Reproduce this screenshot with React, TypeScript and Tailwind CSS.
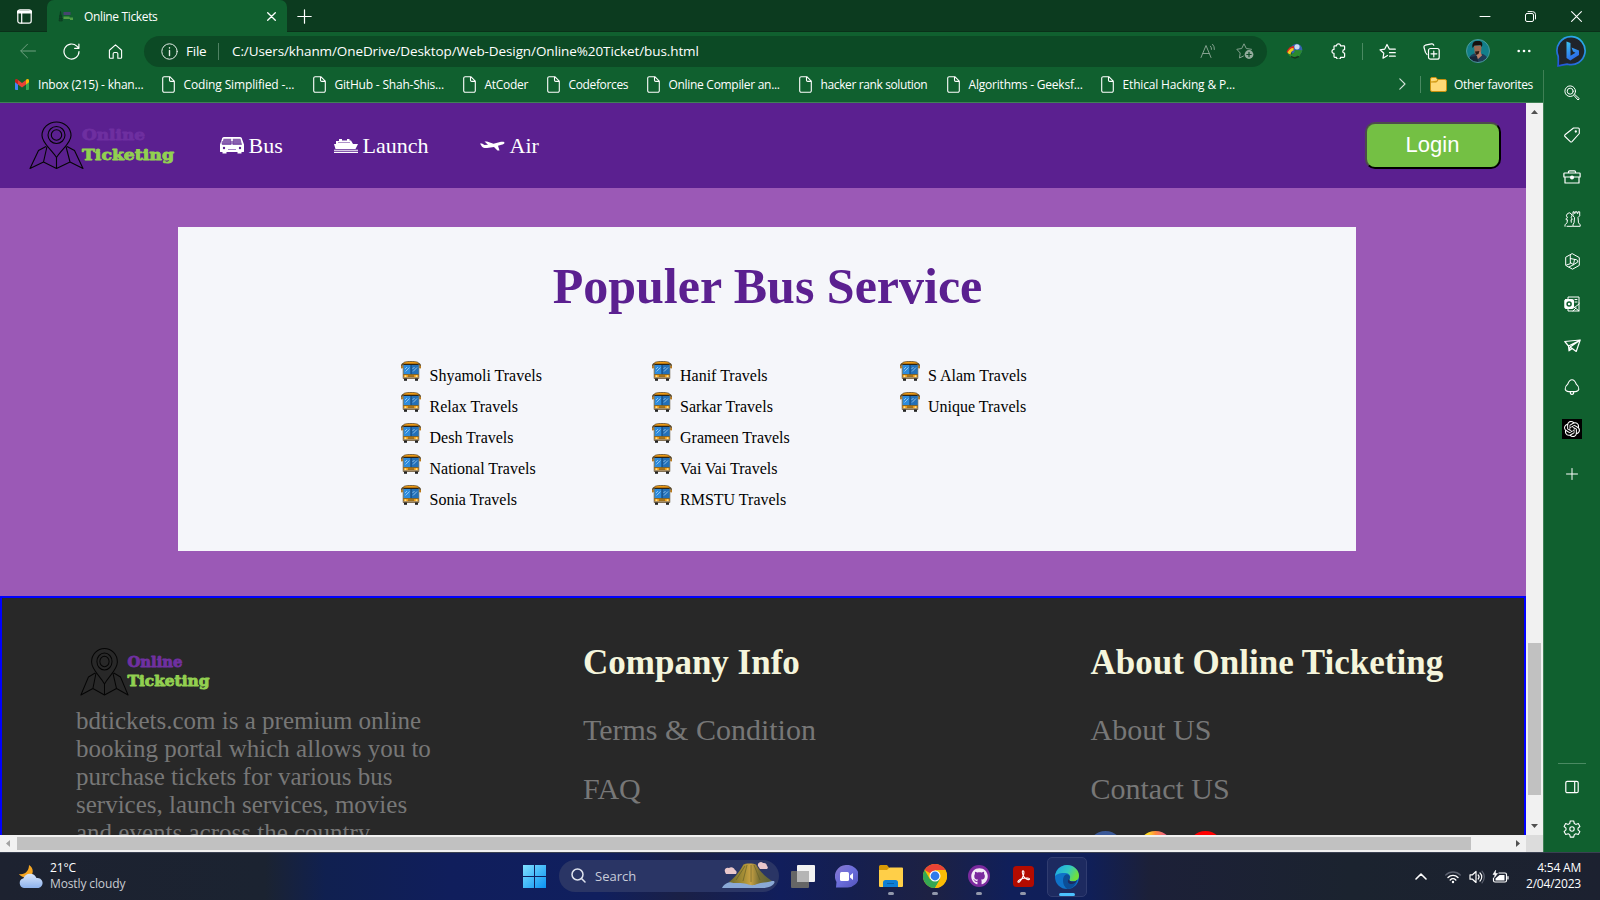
import type { ReactNode } from "react";
import { FaGithub } from "react-icons/fa";
import { SiOpenai } from "react-icons/si";

const UI = "font-['Open_Sans','Noto_Sans',sans-serif]";
const SERIF = "font-['Liberation_Serif',serif]";

type IconProps = { size?: number; w?: number; h?: number; vb?: string; color?: string; sw?: number; children: ReactNode };

function Icon({ size = 16, w, h, vb = "0 0 16 16", color = "#fff", sw = 1, children }: IconProps) {
  return (
    <svg className="block shrink-0" width={w ?? size} height={h ?? size} viewBox={vb} fill="none" stroke={color} strokeWidth={sw} strokeLinecap="round" strokeLinejoin="round">
      {children}
    </svg>
  );
}

/* ---------- browser chrome ---------- */

function TitleBar() {
  return (
    <div className="flex h-[32px] shrink-0 items-end bg-[#0c3b1f] shadow-[inset_0_-1px_0_#0a3019]">
      <div className="flex h-[32px] w-[47px] items-center pl-[17px]">
        <Icon size={15} vb="0 0 15 15" sw={1.2}>
          <rect x="0.8" y="0.8" width="13.4" height="13.4" rx="2.2" />
          <path d="M1 3h13" strokeWidth="3" />
          <path d="M4.7 4v10" />
        </Icon>
      </div>
      <div className="flex h-[32px] w-[240px] items-center rounded-t-[7px] bg-[#10602f] pl-[11px]">
        <svg className="block" width="16" height="16" viewBox="0 0 16 16">
          <path d="M1 13 2.500 3.500l1.800 9.500zM1 8h3.500M1 10.500h4" fill="#0d4a26" stroke="#0b3a1f" strokeWidth=".7" />
          <rect x="5.500" y="4" width="7" height="3" fill="#46456f" />
          <path d="M5.500 8.500h6v1h3.500v2.500H12v-1H5.500z" fill="#4f9e45" />
        </svg>
        <span className="ml-[10px] w-[183px] whitespace-nowrap pt-px text-[12px] leading-[16px] tracking-[-0.35px] text-white">Online Tickets</span>
        <Icon size={9} vb="0 0 9 9" sw={1.3}>
          <path d="M0.7 0.7l7.600 7.600M8.300 0.700l-7.600 7.600" />
        </Icon>
      </div>
      <div className="flex h-[32px] items-center pl-[10px]">
        <Icon size={15} vb="0 0 15 15" sw={1.2}>
          <path d="M7.500 0.800v13.400M0.800 7.500h13.400" />
        </Icon>
      </div>
      <div className="ml-auto flex h-[32px] items-center pr-[18px]">
        <Icon size={12} vb="0 0 12 12">
          <path d="M1 6.500h10" />
        </Icon>
        <div className="ml-[34px]">
          <Icon size={11} vb="0 0 11 11">
            <rect x="0.500" y="2.500" width="8" height="8" rx="1.500" />
            <path d="M3 0.600h4.500a3 3 0 0 1 3 3V8" />
          </Icon>
        </div>
        <div className="ml-[35px]">
          <Icon size={11} vb="0 0 11 11" sw={1.1}>
            <path d="M0.600 0.600l9.800 9.800M10.400 0.600l-9.800 9.800" />
          </Icon>
        </div>
      </div>
    </div>
  );
}

function Toolbar() {
  return (
    <div className="flex h-[38px] shrink-0 items-center bg-[#10602f] pl-[20px]">
      <Icon size={16} color="#6f9f80">
        <path d="M15.500 8H1M7.500 1.200 0.700 8l6.800 6.800" />
      </Icon>
      <div className="ml-[27px]">
        <Icon size={17} vb="0 0 17 17" sw={1.2}>
          <path d="M16 8.500A7.500 7.500 0 1 1 13.800 3.200L15.800 5.200M15.900 1v4.300h-4.300" />
        </Icon>
      </div>
      <div className="ml-[28px]">
        <Icon size={15} vb="0 0 15 16" sw={1.2}>
          <path d="M1 6.700 7.500 1 14 6.700V14.300a.9.9 0 0 1-.9.900H10V10.500A1.500 1.500 0 0 0 8.500 9h-2A1.500 1.500 0 0 0 5 10.500v4.700H1.900a.9.9 0 0 1-.9-.9z" />
        </Icon>
      </div>
      <div className="ml-[21px] flex h-[31px] w-[1123px] items-center rounded-full bg-[#0c4a25] pl-[17px]">
        <Icon size={17} vb="0 0 17 17" color="#e4ece7">
          <circle cx="8.500" cy="8.500" r="7.700" />
          <path d="M8.500 7.500v5M8.500 4.800v.2" strokeWidth="1.400" />
        </Icon>
        <span className="ml-[8px] w-[32px] whitespace-nowrap pt-px text-[13.5px] tracking-[-0.25px] text-white">File</span>
        <div className="h-[17px] w-px bg-[#4f8263]" />
        <span className="ml-[13px] whitespace-nowrap pt-px text-[13.5px] tracking-[-0.1px] text-white">C:/Users/khanm/OneDrive/Desktop/Web-Design/Online%20Ticket/bus.html</span>
        <div className="ml-auto flex items-center gap-[19px] pr-[13px]">
          <Icon size={17} vb="0 0 17 17" color="#84a18f">
            <path d="M1 14.500 6 2.500l5 12M2.800 10.500h6.500M10.500 3.200a4 4 0 0 1 1 3.200M12.600 1.300a6.500 6.500 0 0 1 1.800 5.200" />
          </Icon>
          <Icon size={18} vb="0 0 18 18" color="#84a18f">
            <path d="M7.500 14 3.500 16l.7-5L.8 7.300l4.900-.8L8 1.800l2.300 4.700 5.200.8" />
            <circle cx="13" cy="12.500" r="4.400" fill="#93ab9c" stroke="none" />
            <path d="M13 10.300v4.400M10.800 12.500h4.400" stroke="#0c4a25" strokeWidth="1.200" />
          </Icon>
        </div>
      </div>
      <div className="ml-[19px]">
        <svg className="block" width="17" height="16" viewBox="0 0 17 16">
          <circle cx="10.500" cy="6.500" r="5.800" fill="#3563ae" />
          <circle cx="11" cy="3.800" r="2.600" fill="#c9dbf2" />
          <path d="M0.500 9C2 5 4.500 3 8 3v3C5.500 7 4.500 9 4.500 11z" fill="#d8261f" />
          <path d="M1.500 10c1-3 3-5 6-5v2.500c-2 .5-3 2-3 4.500z" fill="#f3c81c" />
          <path d="M2 10.500c3 2.500 5 .5 7-2.500l-1-1 8.500.2L13 14l-1.500-1.500c-3.500 2.500-8 2.500-9.500-2z" fill="#2a8a2e" />
          <path d="M5 13.500 9 15l4-1.500" stroke="#16301a" fill="none" strokeWidth="1.300" />
        </svg>
      </div>
      <div className="ml-[28px]">
        <Icon size={16} sw={1.2}>
          <path d="M5.500 2.800a2 2 0 0 1 4 0h3.300a.8.8 0 0 1 .8.8v3a1.800 1.800 0 0 0 0 3.600v3.400a.8.8 0 0 1-.8.8H9.500a2 2 0 0 1-4 0H3.800a.8.8 0 0 1-.8-.8v-3.200a2 2 0 0 1 0-4V3.600a.8.8 0 0 1 .8-.8z" />
        </Icon>
      </div>
      <div className="ml-[15px] h-[17px] w-px bg-[#4a8a62]" />
      <div className="ml-[16px]">
        <Icon size={17} vb="0 0 17 17" sw={1.2}>
          <path d="M8.500 12.500 4 15.200l.8-5L1 6.800l4.800-.7L8 1.500l2.300 4.600M10.500 6.200h5.800M10.500 9.700h5.800M10.500 13.200h5.800" />
        </Icon>
      </div>
      <div className="ml-[27px]">
        <Icon size={17} vb="0 0 17 17" sw={1.2}>
          <rect x="5.500" y="5.500" width="10.700" height="10.700" rx="2" />
          <path d="M10.800 8v5.800M8 10.800h5.800M4 11.500 2.500 9.500 1 4.500A2 2 0 0 1 2.300 2.200L8.500 0.900a2 2 0 0 1 2.300 1.300" />
        </Icon>
      </div>
      <div className="ml-[26px]">
        <svg className="block" width="24" height="24" viewBox="0 0 24 24">
          <defs>
            <clipPath id="av"><circle cx="12" cy="12" r="11.500" /></clipPath>
          </defs>
          <g clipPath="url(#av)">
            <rect width="24" height="24" fill="#127f8b" />
            <path d="M2 24c0-6 3-9 8-10l7 1c4 2 6 5 6 9z" fill="#1f3d58" />
            <path d="M8 6.500h7.500l-.3 6-2.500 5-4-3z" fill="#9a6952" />
            <path d="M6.500 9C5.500 3 9 1.500 12 2c3-.5 5.500 1.500 3.800 6L14.500 6 8.500 6.500z" fill="#15110f" />
            <path d="M9.500 13l4.500-1.500 2 5-4.500 4z" fill="#b98068" />
            <path d="M4 18l7-1 1.500 7H2z" fill="#16263a" />
            <path d="M9 12.500l4.500-.5-1 3-2.500 1z" fill="#2a1a14" />
          </g>
          <circle cx="12" cy="12" r="11.500" fill="none" stroke="#4b9a9a" />
        </svg>
      </div>
      <div className="ml-[27px]">
        <svg className="block" width="14" height="4" viewBox="0 0 14 4" fill="#fff">
          <circle cx="1.700" cy="2" r="1.300" />
          <circle cx="7" cy="2" r="1.300" />
          <circle cx="12.300" cy="2" r="1.300" />
        </svg>
      </div>
      <div className="ml-[25px]">
        <svg className="block" width="32" height="32" viewBox="0 0 32 32">
          <defs>
            <linearGradient id="bo" x1="0" y1="1" x2="0.600" y2="0">
              <stop offset="0" stopColor="#2350d8" />
              <stop offset="1" stopColor="#2aa9e8" />
            </linearGradient>
            <linearGradient id="bb" x1="0" y1="0" x2="0.400" y2="1">
              <stop offset="0" stopColor="#3cc4f2" />
              <stop offset="1" stopColor="#2b6bea" />
            </linearGradient>
          </defs>
          <path d="M16 1.700a14 14 0 1 1-4.500 27.500c-3 .6-6.500 1.300-9.500 1.600.5-3 .3-6 .2-9.500A14 14 0 0 1 16 1.700z" fill="#20242a" stroke="url(#bo)" strokeWidth="1.700" />
          <path d="M10.500 6.500l4 1.500v12.800l5-3-2.500-1.200-1.500-4 7.500 3v4.400l-8.700 5.500-3.800-2.500z" fill="url(#bb)" />
        </svg>
      </div>
    </div>
  );
}

const BOOKMARKS = [
  { label: "Coding Simplified -...", w: "w-[151px]", t: "tracking-[-0.14px]" },
  { label: "GitHub - Shah-Shis...", w: "w-[150px]", t: "tracking-[-0.2px]" },
  { label: "AtCoder", w: "w-[84px]", t: "tracking-[-0.3px]" },
  { label: "Codeforces", w: "w-[100px]", t: "tracking-[-0.36px]" },
  { label: "Online Compiler an...", w: "w-[152px]", t: "tracking-[-0.3px]" },
  { label: "hacker rank solution", w: "w-[148px]", t: "tracking-[-0.38px]" },
  { label: "Algorithms - Geeksf...", w: "w-[154px]", t: "tracking-[-0.2px]" },
  { label: "Ethical Hacking & P...", w: "w-[150px]", t: "tracking-[-0.16px]" },
];

function Bookmarks() {
  return (
    <div className="flex h-[33px] shrink-0 items-center border-b border-[#3f8055] bg-[#10602f] pb-[4px] pl-[15px] text-[12px] text-white">
      <div className="flex w-[147px] items-center">
        <svg className="block" width="14" height="11" viewBox="0 0 14 11">
          <path d="M0 1.500V10a1 1 0 0 0 1 1h2V4.500z" fill="#4285f4" />
          <path d="M14 1.500V10a1 1 0 0 1-1 1h-2V4.500z" fill="#34a853" />
          <path d="M3 1v4.500L7 8.500l4-3V1L7 4z" fill="#ea4335" />
          <path d="M0 1.500C0 0 1.800-.5 3 .8V5.500L0 3.300z" fill="#c5221f" />
          <path d="M14 1.500c0-1.500-1.800-2-3-.7v4.700l3-2.200z" fill="#fbbc04" />
        </svg>
        <span className="ml-[9px] whitespace-nowrap pt-px tracking-[-0.2px]">Inbox (215) - khan...</span>
      </div>
      {BOOKMARKS.map((b) => (
        <div key={b.label} className={`flex shrink-0 items-center ${b.w}`}>
          <Icon w={13} h={17} vb="0 0 13 17" sw={1.1}>
            <path d="M2.200.7h5.600l4.500 4.500v9.600a1.500 1.500 0 0 1-1.500 1.500H2.200A1.500 1.500 0 0 1 .7 14.800V2.200A1.500 1.500 0 0 1 2.200.7zM7.500 1v3.200a1.200 1.200 0 0 0 1.200 1.200H12" />
          </Icon>
          <span className={`ml-[8.500px] whitespace-nowrap pt-px ${b.t}`}>{b.label}</span>
        </div>
      ))}
      <div className="ml-auto flex items-center pr-[10px]">
        <Icon w={7} h={12} vb="0 0 7 12" sw={1.1} color="#d5e3da">
          <path d="M.8.800 6 6 .8 11.200" />
        </Icon>
        <div className="ml-[14px] h-[17px] w-px bg-[#4a8a62]" />
        <svg className="ml-[9px] block" width="17" height="15" viewBox="0 0 17 15">
          <path d="M.5 2A1.500 1.500 0 0 1 2 .5h4L7.500 2.500H15A1.500 1.500 0 0 1 16.500 4v9A1.500 1.500 0 0 1 15 14.500H2A1.500 1.500 0 0 1 .5 13z" fill="#ffd976" stroke="#c8900f" />
          <path d="M1 5h5.500L8 3" stroke="#c8900f" fill="#e8b022" />
        </svg>
        <span className="ml-[7px] w-[79px] whitespace-nowrap pt-px tracking-[-0.36px]">Other favorites</span>
      </div>
    </div>
  );
}

function Sidebar() {
  return (
    <div className="flex w-[57px] shrink-0 flex-col items-center border-l border-[#3f8055] bg-[#10602f] pt-[15px]">
      <div className="flex flex-col items-center gap-[26px]">
        <Icon size={16}>
          <circle cx="6.200" cy="6.200" r="5.300" />
          <circle cx="6.200" cy="6.200" r="3" />
          <path d="M10 10.500 14 15l1.300-1.300L10.800 9.500" />
        </Icon>
        <Icon size={16} sw={1.1}>
          <path d="M9.500 1h4.800a1 1 0 0 1 1 1v4.500L8 14.600a1.200 1.200 0 0 1-1.700 0L1 9.500a1.200 1.200 0 0 1 0-1.700z" />
          <circle cx="11.800" cy="4.500" r=".6" fill="#fff" />
        </Icon>
        <Icon w={18} h={16} vb="0 0 18 16" sw={1.2}>
          <path d="M5.500 4V2.800A1 1 0 0 1 6.500 1.800h5a1 1 0 0 1 1 1V4M1.500 4h15a.6.600 0 0 1 .6.600V8H.9V4.600A.6.600 0 0 1 1.500 4zM2 8.200V14h14V8.200" />
          <circle cx="9" cy="8.500" r="1.400" fill="#fff" />
        </Icon>
        <Icon w={17} h={16} vb="0 0 17 16">
          <path d="M3 15.300h5.500M1 15.300v-1.500l2-2 .5-3H2.200V7.500L3.500 6.700a2.700 2.700 0 1 1 3.500 0L8 7.500v1.300H7l.3 2.500M9.500 15.300h6.700v-1.500l-1.700-2-.5-5.300 1.700-1.700V.8h-1.700v1.500h-1V.8h-1.800v1.500h-1V.8H9V4.800l1.500 1.700-.4 5-1 2z" />
        </Icon>
        <Icon size={17} vb="0 0 17 17">
          <path d="M8.500.8 15.300 4.600v7.800L8.500 16.200 1.700 12.400V4.600zM6.300 2.500v8.200L2.500 12M6.300 5.500l6 1.200a2 2 0 0 1 1.500 2.300L9.500 11.700 6.300 9.500M10.500 6.500 9.500 11.700 5 14" />
        </Icon>
        <Icon w={16} h={16}>
          <path d="M4 3V1h11v6M15 7v8H4v-2M15 8l-4.500 3.500M9 10l6 5M9 15l3-3M11 3.500h2M11 6h2" />
          <rect x=".8" y="3.500" width="8.700" height="9" rx="1" fill="#fff" />
          <circle cx="5.100" cy="8" r="2" stroke="#10602f" strokeWidth="1.500" />
        </Icon>
        <Icon w={17} h={15} vb="0 0 17 15" sw={1.2}>
          <path d="M.8 3.500 16.200 2l-4 11.500-4-3L5 12.800 4.500 8zM4.500 8 16 2.200M5 12.500 6.200 9 16 2.200M8.200 10.500 6.200 9" />
        </Icon>
        <Icon size={16} sw={1.1}>
          <path d="M8 .8c2 0 3.500 2.300 4.300 4.400 1.500 1.300 2.800 3.200 2.500 5-.4 1.800-2 2.400-3.500 2.400H4.700C3.200 12.600 1.600 12 1.200 10.200c-.3-1.800 1-3.700 2.500-5C4.500 3.100 6 .8 8 .8zM6.200 12.800c0 3.500 3.600 3.500 3.600 0" />
        </Icon>
        <div className="mt-[-2px] flex h-[20px] w-[20px] items-center justify-center bg-black">
          <SiOpenai size={16} color="#fff" />
        </div>
        <div className="pt-[3px]">
          <Icon size={12} vb="0 0 12 12">
            <path d="M6 .5v11M.5 6h11" />
          </Icon>
        </div>
      </div>
      <div className="mt-auto h-px w-[28px] bg-[#4a8a62]" />
      <div className="mt-[16px]">
        <Icon size={14} vb="0 0 14 14" sw={1.2}>
          <rect x=".8" y="1.300" width="12.400" height="11.400" rx="1.500" />
          <path d="M9.700 1.500v11" />
        </Icon>
      </div>
      <div className="mb-[14px] mt-[26px]">
        <Icon size={18} vb="0 0 18 18" sw={1.1}>
          <path d="M7.300 1h3.400l.6 2.500 1.500.9 2.500-.8 1.600 2.900-1.900 1.700v1.700l1.900 1.700-1.600 2.900-2.500-.8-1.500.9-.6 2.500H7.300l-.6-2.500-1.500-.9-2.500.8-1.600-2.900L3 9.900V8.200L1.100 6.500l1.600-2.900 2.500.8 1.500-.9z" />
          <circle cx="9" cy="9" r="2.200" />
        </Icon>
      </div>
    </div>
  );
}

/* ---------- web page ---------- */

function Logo({ w, onlineColor }: { w: number; onlineColor: string }) {
  const large = w > 140;
  return (
    <svg className="block" width={w} height="50" viewBox={`0 0 ${w} 50`}>
      <g fill="none" stroke="#050505" strokeWidth="1.100" strokeLinejoin="round" transform={large ? "scale(1,1)" : "translate(0,.5) scale(.89,1)"}>
        <path d="M27.500 36.500C22 28 13 22 13 14.500a14.500 13.500 0 0 1 29 0C42 22 33 28 27.500 36.500z" />
        <circle cx="27.500" cy="14" r="8.500" />
        <circle cx="27.500" cy="14" r="5.200" />
        <path d="M17 25.500 9.500 29.500 1 47.500 14.500 41 27.500 47.500 41 41 54 47.500 45.500 29.500 38 25.500M18 25.500 14.500 41M37 25.500 41 41M27.500 36.500v11" />
      </g>
      <g fontFamily="'DejaVu Serif', serif" fontWeight="700" strokeWidth=".9" strokeLinejoin="round">
        <text x={large ? 53 : 47.5} y={large ? 19 : 19.5} fontSize={large ? 15 : 14} textLength={large ? 63 : 55} lengthAdjust="spacingAndGlyphs" fill={onlineColor} stroke={onlineColor}>Online</text>
        <text x={large ? 53 : 47.5} y={large ? 38.500 : 39} fontSize={large ? 15.500 : 15} textLength={large ? 92 : 82} lengthAdjust="spacingAndGlyphs" fill="#92d050" stroke="#92d050">Ticketing</text>
      </g>
    </svg>
  );
}

function NavItem({ icon, label, w }: { icon: ReactNode; label: string; w: string }) {
  return (
    <div className={`flex shrink-0 items-center gap-[4.500px] ${w}`}>
      {icon}
      <span className="text-[22px] leading-[26px] text-white">{label}</span>
    </div>
  );
}

function NavBar() {
  return (
    <div className={`flex h-[85px] shrink-0 items-center bg-[#5b2090] pl-[29px] pr-[25px] ${SERIF}`}>
      <div className="w-[191px]">
        <Logo w={148} onlineColor="#6e2fa0" />
      </div>
      <NavItem
        w="w-[114px]"
        label="Bus"
        icon={
          <svg className="block" width="24" height="17" viewBox="0 0 24 17">
            <path d="M4 0h16c1.500 0 2 1 2 2l2 5.500v7c0 .5-.5.500-1 .5h-1.500v1.500h-4V15h-11v1.500h-4V15H1c-.5 0-1 0-1-.5v-7L2 2c0-1 .5-2 2-2z" fill="#fff" />
            <path d="M3.500 1.800h7.700v5.500H2.200zM12.800 1.800h7.700l1.300 5.500h-9z" fill="#8a60b0" />
            <path d="M2.200 4v3.300h9V4M12.800 4v3.300h9" stroke="#5b2090" fill="none" strokeWidth=".8" />
            <circle cx="4" cy="11" r="1.200" fill="#5b2090" />
            <circle cx="20" cy="11" r="1.200" fill="#5b2090" />
            <path d="M8 12.500h8" stroke="#a583c4" />
          </svg>
        }
      />
      <NavItem
        w="w-[146px]"
        label="Launch"
        icon={
          <svg className="block" width="24" height="14" viewBox="0 0 24 14">
            <path d="M5 0h3v1.500h5V0h2.500v1.500H17L19 5h5l-2.500 5H1.500L0 5h2V2h3z" fill="#fff" />
            <path d="M4 3.500h12" stroke="#8a60b0" strokeWidth=".7" />
            <path d="M0 11.300h24M0 13.400h24" stroke="#fff" strokeWidth="1.100" />
          </svg>
        }
      />
      <NavItem
        w="w-[100px]"
        label="Air"
        icon={
          <svg className="block" width="25" height="12" viewBox="0 0 25 12">
            <path d="M0 3.500h2L4.500 5 8 4.700 4.500 1.500h2.500L13.500 3.700 21 1.800c2.500-.5 3.500.3 3.500 1 0 1-1.500 1.600-3 2L18 5.700l1.500 4.800h-2L14 7 7 8C4.500 8.200 3 7.700 2 6.700z" fill="#fff" />
          </svg>
        }
      />
      <button className="ml-auto h-[47px] w-[136px] rounded-[10px] border-2 border-b-black border-l-[#4c4c4c] border-r-black border-t-[#4c4c4c] bg-[#74c044] pb-px pr-px font-['Liberation_Sans',sans-serif] text-[22px] leading-[26px] text-white">Login</button>
    </div>
  );
}

function BusIcon() {
  return (
    <svg className="block shrink-0" width="20" height="20" viewBox="0 0 20 20">
      <path d="M3 2.500C.9 2.500.6 4 .8 7M17 2.500c2.100 0 2.400 1.500 2.200 4.500" stroke="#5a4a2c" fill="none" strokeWidth="1.500" />
      <path d="M2.200 2.500C2.500 1 5 .5 10 .5s7.500.5 7.800 2v15H2.200z" fill="#f39c12" stroke="#4a3a20" strokeWidth=".7" />
      <rect x="2.500" y="2.700" width="15" height="1.500" fill="#2b2418" />
      <rect x="2.500" y="4" width="15" height="9.300" fill="#2d8bdc" />
      <rect x="10.200" y="4" width="7.300" height="9.300" fill="#2370b8" />
      <path d="M10 4v9.300" stroke="#123a66" />
      <path d="M4.500 10.500 8.500 6.500M4 8l2-2M12 10.500 16 6.500M11.500 8l2-2" stroke="#a9d3f5" strokeWidth=".8" />
      <path d="M2.500 13.500h15" stroke="#7a5513" strokeWidth=".7" />
      <circle cx="4.500" cy="15.200" r="1" fill="#ffe08a" />
      <circle cx="15.500" cy="15.200" r="1" fill="#ffe08a" />
      <rect x="7" y="14.300" width="6" height="1.500" fill="#8a6520" />
      <rect x="2.200" y="16.300" width="15.600" height="1" fill="#8b8b86" />
      <rect x="3" y="17.500" width="3" height="2.300" fill="#222" />
      <rect x="14" y="17.500" width="3" height="2.300" fill="#222" />
      <rect x="0" y="4.800" width="1.600" height="2.600" fill="#b9791a" />
      <rect x="18.400" y="4.800" width="1.600" height="2.600" fill="#b9791a" />
    </svg>
  );
}

const SERVICES = [
  { w: "w-[250.500px]", items: ["Shyamoli Travels", "Relax Travels", "Desh Travels", "National Travels", "Sonia Travels"] },
  { w: "w-[248px]", items: ["Hanif Travels", "Sarkar Travels", "Grameen Travels", "Vai Vai Travels", "RMSTU Travels"] },
  { w: "w-[200px]", items: ["S Alam Travels", "Unique Travels"] },
];

function Services() {
  return (
    <div className={`flex h-[408px] shrink-0 justify-center bg-[#9b59b6] pl-[8px] pt-[39px] ${SERIF}`}>
      <div className="h-[324px] w-[1178px] bg-[#f5f6fa] pt-[30px]">
        <h1 className="pl-px text-center text-[50px] font-bold leading-[58px] text-[#5b2090]">Populer Bus Service</h1>
        <div className="mt-[46px] flex pl-[223px]">
          {SERVICES.map((c) => (
            <ul key={c.items[0]} className={`shrink-0 ${c.w}`}>
              {c.items.map((s) => (
                <li key={s} className="flex h-[31px] items-start">
                  <BusIcon />
                  <span className="ml-[8.500px] pt-[6px] text-[16px] leading-[18px] text-black">{s}</span>
                </li>
              ))}
            </ul>
          ))}
        </div>
      </div>
    </div>
  );
}

function Footer() {
  return (
    <div className={`flex h-[400px] w-[1526px] shrink-0 border-2 border-[#0000ff] bg-[#282828] pl-[74px] text-[#777] ${SERIF}`}>
      <div className="w-[507px] shrink-0 pt-[49px]">
        <div className="pl-[4px]">
          <Logo w={132} onlineColor="#7030a0" />
        </div>
        <p className="mt-[10px] whitespace-nowrap text-[25px] leading-[28px]">
          bdtickets.com is a premium online
          <br />
          booking portal which allows you to
          <br />
          purchase tickets for various bus
          <br />
          services, launch services, movies
          <br />
          and events across the country.
        </p>
      </div>
      <div className="w-[507.500px] shrink-0 pt-[45px]">
        <h2 className="text-[35px] font-bold leading-[40px] text-[#f5f5dc]">Company Info</h2>
        <div className="mt-[30px] text-[30px] leading-[34px]">Terms &amp; Condition</div>
        <div className="mt-[25px] text-[30px] leading-[34px]">FAQ</div>
      </div>
      <div className="shrink-0 pt-[45px]">
        <h2 className="text-[35px] font-bold leading-[40px] text-[#f5f5dc]">About Online Ticketing</h2>
        <div className="mt-[30px] text-[30px] leading-[34px]">About US</div>
        <div className="mt-[25px] text-[30px] leading-[34px]">Contact US</div>
        <div className="mt-[25px] flex gap-[15px]">
          <div className="ml-[-3px] h-[35px] w-[35px] rounded-full bg-[#3b5998]" />
          <div className="h-[35px] w-[35px] rounded-full bg-linear-to-r from-[#ffd521] from-30% via-[#ff8a3c] to-[#e0319f]" />
          <div className="h-[35px] w-[35px] rounded-full bg-[#ff0000]" />
        </div>
      </div>
    </div>
  );
}

function Arrow({ d, color = "#505050" }: { d: string; color?: string }) {
  return (
    <svg className="block shrink-0" width="17" height="17" viewBox="0 0 17 17">
      <path d={d} fill={color} />
    </svg>
  );
}

function PageView() {
  return (
    <div className="flex w-[1543px] grow flex-col overflow-hidden">
      <div className="flex h-[732px] shrink-0">
        <div className="flex h-[732px] w-[1526px] flex-col overflow-hidden">
          <NavBar />
          <Services />
          <Footer />
        </div>
        <div className="flex w-[17px] flex-col items-center bg-[#f1f1f1]">
          <Arrow d="M5 11h7L8.500 7z" />
          <div className="mt-[523px] h-[152px] w-[13px] bg-[#c1c1c1]" />
          <div className="mt-auto">
            <Arrow d="M5 6h7l-3.500 4z" />
          </div>
        </div>
      </div>
      <div className="flex h-[17px] shrink-0 items-center bg-[#f1f1f1]">
        <Arrow d="M10 5v7L6 8.500z" color="#a3a3a3" />
        <div className="h-[13px] w-[1454px] bg-[#c1c1c1]" />
        <div className="ml-[38px]">
          <Arrow d="M7 5v7l4-3.500z" />
        </div>
        <div className="h-[17px] w-[17px] bg-[#dcdcdc]" />
      </div>
    </div>
  );
}

/* ---------- taskbar ---------- */

function TaskItem({ w, dot, children }: { w: string; dot?: boolean; children: ReactNode }) {
  return (
    <div className={`flex h-[47px] shrink-0 flex-col items-center pt-[11px] ${w}`}>
      <div className="flex h-[24px] items-center">{children}</div>
      {dot && <div className="mt-[4px] h-[3px] w-[6px] rounded-full bg-[#9298ab]" />}
    </div>
  );
}

function Taskbar() {
  return (
    <div className="flex h-[48px] shrink-0 items-center border-t border-[#3a4152] bg-[linear-gradient(90deg,#1d2230_0,#1b2331_265px,#102050_325px,#101e5c_450px,#101f5e_600px,#1a2046_680px,#111e5c_780px,#151f50_850px,#1d2143_930px,#101f5a_1010px,#101f58_1090px,#1c2038_1150px,#1b232f_1350px,#1c2130_100%)]">
      <div className="flex w-[514px] items-center pl-[18px]">
        <svg className="block" width="26" height="24" viewBox="0 0 26 24">
          <defs>
            <linearGradient id="cl" x1="0" y1="0" x2="0" y2="1">
              <stop offset="0" stopColor="#dbe7fb" />
              <stop offset="1" stopColor="#8db2ec" />
            </linearGradient>
          </defs>
          <path d="M11 0c5 3 5 10 0 12-4 1.500-8 0-10-3 6 1 10-3 10-9z" fill="#f5a623" />
          <path d="M6 23a5 5 0 0 1-.5-9.800A7 7 0 0 1 18.500 13 5 5 0 1 1 20.500 23z" fill="url(#cl)" />
        </svg>
        <div className="ml-[6px] pb-[2px] text-[12px] leading-[16px] tracking-[-0.12px] text-white">
          <div>21°C</div>
          <div className="text-[#c9ccd2]">Mostly cloudy</div>
        </div>
      </div>
      <TaskItem w="w-[41px]">
        <svg className="block" width="23" height="23" viewBox="0 0 23 23">
          <defs>
            <linearGradient id="wn" x1="0" y1="0" x2="1" y2="1">
              <stop offset="0" stopColor="#7fe0ff" />
              <stop offset="1" stopColor="#0a93f2" />
            </linearGradient>
          </defs>
          <path d="M0 0h11v11H0zM12 0h11v11H12zM0 12h11v11H0zM12 12h11v11H12z" fill="url(#wn)" />
        </svg>
      </TaskItem>
      <div className="mb-[2px] ml-[4px] flex h-[32px] w-[220px] shrink-0 items-center rounded-full bg-[#2a3565] pl-[12px]">
        <Icon size={15} vb="0 0 15 15" sw={1.500} color="#dfe3ee">
          <circle cx="6.500" cy="6.500" r="5.500" />
          <path d="M10.500 10.500 14 14" />
        </Icon>
        <span className="ml-[9px] text-[13px] leading-[18px] text-[#c8ccd9]">Search</span>
        <svg className="ml-auto mr-[3px] block" width="55" height="27" viewBox="0 0 55 27">
          <defs>
            <linearGradient id="mt" x1="0" y1="0" x2="1" y2="0">
              <stop offset="0" stopColor="#6b6a2f" />
              <stop offset=".35" stopColor="#a88f35" />
              <stop offset=".5" stopColor="#c9a244" />
              <stop offset=".7" stopColor="#7a7033" />
              <stop offset="1" stopColor="#59613a" />
            </linearGradient>
          </defs>
          <path d="M1 26C3 21 10 19 20 18l33 1c2 3-4 7-12 7z" fill="#8aa9d6" />
          <path d="M4 10a3 3 0 0 1 4-4 4 4 0 0 1 6 2 2.500 2.500 0 0 1 1 4H5z" fill="#e9c7cb" />
          <path d="M37 4a3 3 0 0 1 5-3 3.500 3.500 0 0 1 4 3 2 2 0 0 1 0 3h-7z" fill="#e9c7cb" />
          <path d="M8 20C15 15 20 7 22.500 2.500c1-1.500 11-1.500 12.500 0C38 8 43 14 51 19c-6 2-10 1-15 3-4 2-7 1-10 0-6-2-12 0-18-2z" fill="url(#mt)" />
          <path d="M26 3 22 19M30 3v17M33 3l6 15M24 4l-9 14" stroke="#5d5a2a" strokeWidth="1" opacity=".6" />
        </svg>
      </div>
      <TaskItem w="w-[48px]">
        <svg className="block" width="24" height="23" viewBox="0 0 24 23">
          <rect x="6" y="0" width="18" height="17" rx="1" fill="#f2f2f2" />
          <rect x="0" y="6" width="18" height="17" rx="1" fill="#666" />
          <rect x="6" y="6" width="12" height="11" fill="#b5b5b5" />
        </svg>
      </TaskItem>
      <TaskItem w="w-[39px]">
        <svg className="block" width="23" height="23" viewBox="0 0 23 23">
          <defs>
            <linearGradient id="ch" x1="0" y1="0" x2="1" y2="1">
              <stop offset="0" stopColor="#8a78cf" />
              <stop offset=".5" stopColor="#6a6ddb" />
              <stop offset="1" stopColor="#5252b8" />
            </linearGradient>
          </defs>
          <path d="M11.500 0a11.300 11.300 0 1 1 0 22.500H1L1.500 17A11.300 11.300 0 0 1 11.500 0z" fill="url(#ch)" />
          <rect x="5" y="7" width="9" height="9" rx="1.500" fill="#fff" />
          <path d="M15 10.500l3-2.500v7l-3-2.500z" fill="#fff" />
        </svg>
      </TaskItem>
      <TaskItem w="w-[50px]" dot>
        <svg className="block" width="24" height="22" viewBox="0 0 24 22">
          <path d="M0 1.500A1.500 1.500 0 0 1 1.500 0H8l2 2.500v3H0z" fill="#d99a06" />
          <path d="M0 5h8l2.500-2.500H23a1 1 0 0 1 1 1V21a1 1 0 0 1-1 1H1a1 1 0 0 1-1-1z" fill="#ffcf48" />
          <path d="M4 22v-4.500A2.500 2.500 0 0 1 6.500 15h10a2.500 2.500 0 0 1 2.500 2.500V22z" fill="#0f7fd6" />
          <path d="M8 18.500h7" stroke="#0a5fa8" />
        </svg>
      </TaskItem>
      <TaskItem w="w-[38px]" dot>
        <svg className="block" width="24" height="24" viewBox="0 0 24 24">
          <circle cx="12" cy="12" r="12" fill="#fbbc05" />
          <path d="M12 12 1.600 6A12 12 0 0 1 22.400 6H12z" fill="#ea4335" />
          <path d="M1.600 6A12 12 0 0 0 12 24l5.200-9H12L6.800 15z" fill="#34a853" />
          <path d="M22.400 6H12l5.200 9L12 24A12 12 0 0 0 22.400 6z" fill="#fbbc05" />
          <circle cx="12" cy="12" r="5.500" fill="#fff" />
          <circle cx="12" cy="12" r="4.400" fill="#2f7bea" />
        </svg>
      </TaskItem>
      <TaskItem w="w-[50px]" dot>
        <div className="flex h-[22px] w-[22px] items-center justify-center rounded-full bg-[#7b2a9e]">
          <FaGithub size={17} color="#f4ecf7" />
        </div>
      </TaskItem>
      <TaskItem w="w-[38px]" dot>
        <svg className="block" width="21" height="21" viewBox="0 0 21 21">
          <rect width="21" height="21" rx="3.500" fill="#b30b00" />
          <path d="M9.500 5c1.700-.7 1.700 1.500 1 4-.8 2.700-2.500 5.500-4 6.800-1.300 1-2.300 0-1-1.200 1.800-1.600 6-2.800 9.200-2.600 2.500.2 2.300 2 .4 1.600-2.300-.5-4.600-3-5.300-5.200-.4-1.300-.8-2.900-.3-3.400z" fill="none" stroke="#fff" strokeWidth="1.100" />
        </svg>
      </TaskItem>
      <div className="ml-[5px] flex h-[40px] w-[40px] shrink-0 flex-col items-center rounded-[5px] border border-[#303c70] bg-[#1d2a60] pt-[7px]">
        <svg className="block shrink-0" width="24" height="24" viewBox="0 0 24 24">
          <defs>
            <linearGradient id="e1" x1="0" y1="0" x2="1" y2=".4">
              <stop offset="0" stopColor="#1ba4e8" />
              <stop offset=".6" stopColor="#34c8c0" />
              <stop offset="1" stopColor="#6fe03c" />
            </linearGradient>
          </defs>
          <circle cx="12" cy="12" r="12" fill="#0f72c8" />
          <path d="M0 11.500C.5 5 5.500 0 12 0s12 5 12 10.500c0 4-3 6-6 6-3.500 0-4.500-1.500-3.500-2.500 2-2.500-.5-6-4-6C5.500 7.500 1 9 0 11.500z" fill="url(#e1)" />
          <path d="M8 15c0-3 1.500-5 3.500-5.800 3 .3 4.300 3 3 4.800-1 1-.5 2.500 3 2.500 2 0 3.500-.5 4.700-1.800C21 20 17 24 12.500 24 9 22 8 18 8 15z" fill="#0c4d96" />
          <path d="M14.700 13.800c-1 1.200-.2 2.700 3.300 2.700 1.800 0 3.200-.5 4.200-1.500-1.500 3-4 4.500-7 4-3-1-3-4-.5-5.200z" fill="#1d2a60" />
        </svg>
        <div className="mt-[4px] h-[3px] w-[16px] shrink-0 rounded-full bg-[#4cc2ff]" />
      </div>
      <div className="ml-auto flex items-center pr-[19px]">
        <Icon w={12} h={7} vb="0 0 12 7" sw={1.600}>
          <path d="M1 6 6 1l5 5" />
        </Icon>
        <div className="ml-[18px]">
          <Icon w={16} h={14} vb="0 0 16 14" sw={1.400}>
            <path d="M.8 5a10.200 10.200 0 0 1 14.400 0" stroke="#5d6270" />
            <path d="M3 7.500a7 7 0 0 1 10 0M5.200 9.900a4 4 0 0 1 5.600 0" />
            <circle cx="8" cy="12" r="1.200" fill="#fff" stroke="none" />
          </Icon>
        </div>
        <div className="ml-[8px]">
          <Icon w={16} h={14} vb="0 0 16 14" sw={1.200}>
            <path d="M1 4.800h2.500L7 1.500v11L3.500 9.200H1zM9.200 5a3 3 0 0 1 0 4M11 3a5.500 5.500 0 0 1 0 8" />
            <path d="M13 1.200a8.500 8.500 0 0 1 0 11.600" stroke="#5d6270" />
          </Icon>
        </div>
        <div className="ml-[7px]">
          <Icon w={17} h={14} vb="0 0 17 14" sw={1.200}>
            <path d="M7 3h6a1.500 1.500 0 0 1 1.500 1.500v6A1.500 1.500 0 0 1 13 12H3a1.500 1.500 0 0 1-1.500-1.500V8M16 6.500v2.500" />
            <path d="M7.500 5H12.500v5.500H3.500V8.500z" fill="#fff" stroke="none" />
            <path d="M3.500.5 1 4.500h2L2.500 7.500 5.500 3.500h-2z" fill="#fff" strokeWidth=".6" />
          </Icon>
        </div>
        <div className="w-[72px] pb-[2px] text-right text-[12px] leading-[16px] tracking-[-0.2px] text-white">
          <div>4:54 AM</div>
          <div>2/04/2023</div>
        </div>
      </div>
    </div>
  );
}

export default function App() {
  return (
    <div className={`flex h-[900px] w-[1600px] flex-col overflow-hidden bg-[#10602f] ${UI}`}>
      <TitleBar />
      <Toolbar />
      <div className="flex h-[782px] shrink-0">
        <div className="flex w-[1543px] shrink-0 flex-col">
          <Bookmarks />
          <PageView />
        </div>
        <Sidebar />
      </div>
      <Taskbar />
    </div>
  );
}
